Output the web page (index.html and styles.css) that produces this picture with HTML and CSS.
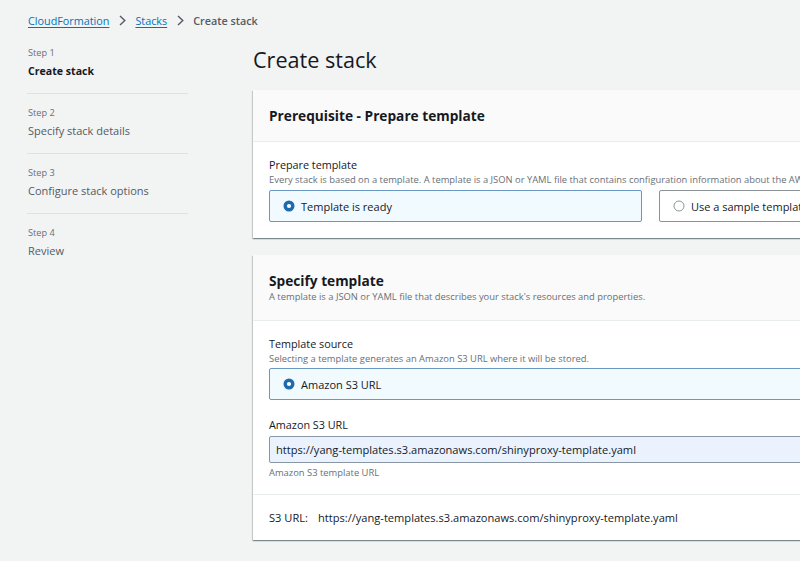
FILE: index.html
```html
<!DOCTYPE html>
<html lang="en">
<head>
<meta charset="utf-8">
<title>Create stack</title>
<link rel="stylesheet" href="styles.css">
</head>
<body>
<nav class="breadcrumb">
  <a class="crumb-link" href="#">CloudFormation</a>
  <svg class="chev" width="7" height="11" viewBox="0 0 7 11"><polyline points="1,1 5.8,5.5 1,10" fill="none" stroke="#545b64" stroke-width="1.4"/></svg>
  <a class="crumb-link" href="#">Stacks</a>
  <svg class="chev" width="7" height="11" viewBox="0 0 7 11"><polyline points="1,1 5.8,5.5 1,10" fill="none" stroke="#545b64" stroke-width="1.4"/></svg>
  <span class="crumb-current">Create stack</span>
</nav>
<div class="layout">
  <aside class="steps">
    <div class="step">
      <div class="step-num">Step 1</div>
      <div class="step-title current">Create stack</div>
    </div>
    <div class="step">
      <div class="step-num">Step 2</div>
      <div class="step-title">Specify stack details</div>
    </div>
    <div class="step">
      <div class="step-num">Step 3</div>
      <div class="step-title">Configure stack options</div>
    </div>
    <div class="step last">
      <div class="step-num">Step 4</div>
      <div class="step-title">Review</div>
    </div>
  </aside>
  <main class="main">
    <h1 class="page-title">Create stack</h1>
    <section class="card">
      <header class="card-header">
        <h2 class="card-title">Prerequisite - Prepare template</h2>
      </header>
      <div class="card-body">
        <div class="field-label">Prepare template</div>
        <div class="field-desc">Every stack is based on a template. A template is a JSON or YAML file that contains configuration information about the AWS resources you want to include in the stack.</div>
        <div class="tiles">
          <div class="tile selected">
            <svg class="radio" width="12" height="12" viewBox="0 0 12 12"><circle cx="6" cy="6" r="3.8" fill="#fff" stroke="#1d6aae" stroke-width="3.4"/></svg>
            <span>Template is ready</span>
          </div>
          <div class="tile">
            <svg class="radio" width="12" height="12" viewBox="0 0 12 12"><circle cx="6" cy="6" r="5" fill="#fff" stroke="#8d9799" stroke-width="1"/></svg>
            <span>Use a sample template</span>
          </div>
        </div>
      </div>
    </section>
    <section class="card">
      <header class="card-header">
        <h2 class="card-title">Specify template</h2>
        <div class="header-desc">A template is a JSON or YAML file that describes your stack's resources and properties.</div>
      </header>
      <div class="card-body">
        <div class="field-label">Template source</div>
        <div class="field-desc">Selecting a template generates an Amazon S3 URL where it will be stored.</div>
        <div class="tile selected wide">
          <svg class="radio" width="12" height="12" viewBox="0 0 12 12"><circle cx="6" cy="6" r="3.8" fill="#fff" stroke="#1d6aae" stroke-width="3.4"/></svg>
          <span>Amazon S3 URL</span>
        </div>
        <div class="field second">
          <div class="field-label">Amazon S3 URL</div>
          <div class="input">https://yang-templates.s3.amazonaws.com/shinyproxy-template.yaml</div>
          <div class="field-help">Amazon S3 template URL</div>
        </div>
      </div>
      <footer class="card-footer">
        <span class="footer-key">S3 URL:</span><span class="url">https://yang-templates.s3.amazonaws.com/shinyproxy-template.yaml</span>
      </footer>
    </section>
  </main>
</div>
</body>
</html>
```
FILE: styles.css
```css
html, body {
  margin: 0;
  padding: 0;
}
body {
  background: #f2f3f3;
  font-family: "Open Sans", "Noto Sans", sans-serif;
  color: #16191f;
  font-size: 10.8px;
  width: 800px;
  height: 561px;
  overflow: hidden;
}
.breadcrumb {
  display: flex;
  align-items: center;
  height: 17px;
  padding: 12px 0 0 28px;
  line-height: 17px;
  font-size: 10.8px;
}
.crumb-link {
  color: #0073bb;
  text-decoration: underline;
  text-underline-offset: 1.5px;
}
.chev {
  margin: 0 9px 0 10px;
  display: block;
}
.crumb-current {
  color: #545b64;
  font-weight: 600;
  font-size: 10.8px;
}
.layout {
  display: flex;
  padding-top: 17px;
}
.steps {
  width: 161px;
  margin-left: 27px;
  flex: none;
}
.step {
  padding: 0 0 14px 1px;
  margin-bottom: 12px;
  border-bottom: 1px solid #dfe2e3;
}
.step.last {
  border-bottom: none;
}
.step-num {
  font-size: 9.2px;
  line-height: 13px;
  color: #687078;
  margin-bottom: 4px;
}
.step-title {
  font-size: 11px;
  line-height: 16px;
  color: #545b64;
}
.step-title.current {
  color: #16191f;
  font-weight: 700;
  font-size: 10.6px;
}
.main {
  margin-left: 65px;
  width: 795px;
  flex: none;
}
.page-title {
  margin: 1px 0 17px;
  font-size: 21.6px;
  line-height: 26px;
  font-weight: 400;
  color: #16191f;
}
.card {
  background: #fff;
  box-shadow: 0 1px 1px 0 rgba(0, 28, 36, 0.3), 1px 1px 1px 0 rgba(0, 28, 36, 0.15), -1px 1px 1px 0 rgba(0, 28, 36, 0.15);
  margin-bottom: 17px;
}
.card-header {
  background: #fafafa;
  border-bottom: 1px solid #eaeded;
  padding: 16px 16px 15px;
}
.card-title {
  margin: 0;
  font-size: 13.7px;
  line-height: 20px;
  font-weight: 700;
  color: #16191f;
}
.header-desc {
  font-size: 9.4px;
  line-height: 14px;
  color: #687078;
  white-space: nowrap;
  margin-top: -1px;
  padding-bottom: 1px;
}
.card-body {
  padding: 15px 16px 16px;
}
.field-label {
  font-size: 10.8px;
  line-height: 16px;
  color: #16191f;
}
.field-desc {
  font-size: 9.4px;
  line-height: 13px;
  color: #687078;
  white-space: nowrap;
  margin-bottom: 4px;
}
.tiles {
  display: grid;
  grid-template-columns: 373px 373px;
  gap: 17px;
}
.tile {
  display: flex;
  align-items: center;
  height: 30px;
  border: 1px solid #8c9396;
  border-radius: 2px;
  padding-left: 13px;
  background: #fff;
  font-size: 11px;
  white-space: nowrap;
}
.tile.selected {
  background: #f1faff;
  border-color: #6b98c2;
}
.tile.wide {
  margin-top: -1px;
}
.radio {
  display: block;
  margin-right: 6px;
}
.field.second {
  margin-top: 17px;
}
.field.second .field-label {
  margin-bottom: 3px;
}
.input {
  height: 25px;
  line-height: 25px;
  border: 1px solid #8a96a3;
  border-radius: 2px;
  background: #eaf2fd;
  padding-left: 6px;
  font-size: 11.1px;
  color: #16191f;
  white-space: nowrap;
}
.field-help {
  font-size: 9.4px;
  line-height: 13px;
  color: #687078;
  margin-top: 3px;
}
.card-body + .card-footer {
  margin-top: -1px;
}
.card-footer {
  border-top: 1px solid #eaeded;
  padding: 15px 16px 14px;
  line-height: 16px;
  font-size: 11.1px;
  color: #16191f;
  white-space: nowrap;
}
.footer-key {
  margin-right: 10px;
}
```
